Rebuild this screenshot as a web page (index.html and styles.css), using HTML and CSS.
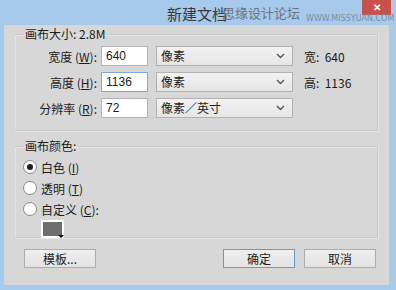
FILE: index.html
```html
<!DOCTYPE html>
<html lang="zh-CN">
  <head>
    <meta charset="UTF-8" />
    <title>新建文档</title>
    <link rel="stylesheet" href="styles.css">
  </head>
  <body>
    <div class="window">
      <div class="titlebar">
        <span class="title">新建文档</span>
        <div class="close">&#x2715;</div>
        <span class="watermark">思缘设计论坛<small>WWW.MISSYUAN.COM</small></span>
      </div>

      <div class="panel">
        <!-- canvas size -->
        <fieldset class="group size-group">
          <legend>画布大小: 2.8M</legend>
          <div class="row">
            <label class="field-label">宽度 (<u>W</u>):</label>
            <div class="input">640</div>
            <div class="select">像素<svg class="arrow" width="9" height="6" viewBox="0 0 9 6"><path d="M1 1l3.5 3.5L8 1" fill="none" stroke="#555" stroke-width="1.4"/></svg></div>
            <span class="info">宽:&nbsp; 640</span>
          </div>
          <div class="row">
            <label class="field-label">高度 (<u>H</u>):</label>
            <div class="input focused">1136</div>
            <div class="select">像素<svg class="arrow" width="9" height="6" viewBox="0 0 9 6"><path d="M1 1l3.5 3.5L8 1" fill="none" stroke="#555" stroke-width="1.4"/></svg></div>
            <span class="info">高:&nbsp; 1136</span>
          </div>
          <div class="row">
            <label class="field-label">分辨率 (<u>R</u>):</label>
            <div class="input">72</div>
            <div class="select">像素／英寸<svg class="arrow" width="9" height="6" viewBox="0 0 9 6"><path d="M1 1l3.5 3.5L8 1" fill="none" stroke="#555" stroke-width="1.4"/></svg></div>
          </div>
        </fieldset>

        <!-- canvas colour -->
        <fieldset class="group color-group">
          <legend>画布颜色:</legend>
          <div class="radio-row"><span class="radio checked"></span>白色 (<u>I</u>)</div>
          <div class="radio-row"><span class="radio"></span>透明 (<u>T</u>)</div>
          <div class="radio-row"><span class="radio"></span>自定义 (<u>C</u>):</div>
          <div class="swatch"><span class="swatch-arrow"></span></div>
        </fieldset>

        <div class="buttons">
          <div class="button">模板...</div>
          <div class="spacer"></div>
          <div class="button default">确定</div>
          <div class="button">取消</div>
        </div>
      </div>
    </div>
  </body>
</html>
```

FILE: styles.css
```css
body {
  margin: 0;
  padding: 0;
  font-family: "Liberation Sans", "Noto Sans CJK SC", sans-serif;
  font-size: 12px;
  color: #1c1c1c;
}

.window {
  width: 396px;
  height: 290px;
  background: #a6c9ec;
  overflow: hidden;
}

.titlebar {
  position: relative;
  height: 25px;
}

.title {
  position: absolute;
  left: 167px;
  top: 3px;
  font-family: "Noto Sans CJK SC", sans-serif;
  font-size: 15px;
  color: #3a3a3a;
}

.watermark {
  position: absolute;
  left: 222px;
  top: 5px;
  white-space: nowrap;
  font-family: "Noto Sans CJK SC", sans-serif;
  font-size: 13px;
  line-height: 16px;
  color: #6b7380;
}

.watermark small {
  font-family: "DejaVu Sans", sans-serif;
  font-size: 8px;
  line-height: 8px;
  color: #7f8ea0;
  margin-left: 6px;
  vertical-align: -3px;
}

.close {
  position: absolute;
  right: 5px;
  top: 0;
  width: 29px;
  height: 15px;
  background: #c9514b;
  color: #fff;
  font-size: 10px;
  font-weight: bold;
  text-align: center;
  line-height: 15px;
}

.panel {
  margin: 0 7px 0 4px;
  height: 260px;
  background: #d7d7d7;
  box-sizing: border-box;
  padding: 2px 8px 0 10px;
  font-family: "Noto Sans CJK SC", sans-serif;
}

.group {
  margin: 0;
  padding: 0;
  border: 1px solid #c9c9c9;
  box-shadow: inset 1px 1px 0 #e4e4e4, 1px 1px 0 #e4e4e4;
  border-left-color: transparent;
  box-sizing: border-box;
  width: 364px;
}

.group legend {
  margin-left: 8px;
  padding: 0 2px;
  line-height: 14px;
}

.size-group {
  height: 104px;
  padding-top: 5px;
}

.row {
  display: flex;
  align-items: center;
  height: 20px;
  margin-bottom: 6px;
}

.field-label {
  width: 82px;
  text-align: right;
  padding-right: 4px;
}

.input {
  width: 47px;
  height: 20px;
  box-sizing: border-box;
  background: #fff;
  border: 1px solid #b4b4b4;
  padding: 0 4px;
  line-height: 18px;
  font-family: "Liberation Sans", sans-serif;
}

.input.focused {
  border-color: #7ea9d8;
}

.select {
  width: 137px;
  height: 20px;
  margin-left: 8px;
  box-sizing: border-box;
  background: linear-gradient(#f2f2f2, #e6e6e6);
  border: 1px solid #b2b2b2;
  padding: 0 4px;
  line-height: 18px;
  display: flex;
  align-items: center;
  justify-content: space-between;
}

.arrow {
  margin-right: 3px;
}

.info {
  margin-left: 11px;
}

.color-group {
  margin-top: 8px;
  height: 99px;
  padding-top: 4px;
}

.radio-row {
  display: flex;
  align-items: center;
  height: 20px;
  margin-left: 8px;
  margin-bottom: 1px;
}

.radio {
  width: 12px;
  height: 12px;
  border-radius: 50%;
  border: 1px solid #8a8a8a;
  background: #fff;
  margin-right: 4px;
  display: flex;
  align-items: center;
  justify-content: center;
}

.radio.checked::after {
  content: "";
  width: 6px;
  height: 6px;
  border-radius: 50%;
  background: #1e1e1e;
}

.swatch {
  position: relative;
  width: 23px;
  height: 18px;
  margin: 1px 0 0 26px;
  box-sizing: border-box;
  border: 2px solid #fff;
  background: #6e6e6e;
}

.swatch-arrow {
  position: absolute;
  right: -2px;
  bottom: -2px;
  width: 0;
  height: 0;
  border-left: 3px solid transparent;
  border-right: 3px solid transparent;
  border-top: 3px solid #000;
}

.buttons {
  display: flex;
  gap: 9px;
  margin-top: 11px;
  padding: 0 5px 0 10px;
}

.spacer {
  flex: 1;
}

.button {
  width: 72px;
  height: 19px;
  box-sizing: border-box;
  border: 1px solid #acacac;
  background: linear-gradient(#efefef, #e4e4e4);
  text-align: center;
  line-height: 17px;
}

.button.default {
  border-color: #5d9dd6;
}
```
